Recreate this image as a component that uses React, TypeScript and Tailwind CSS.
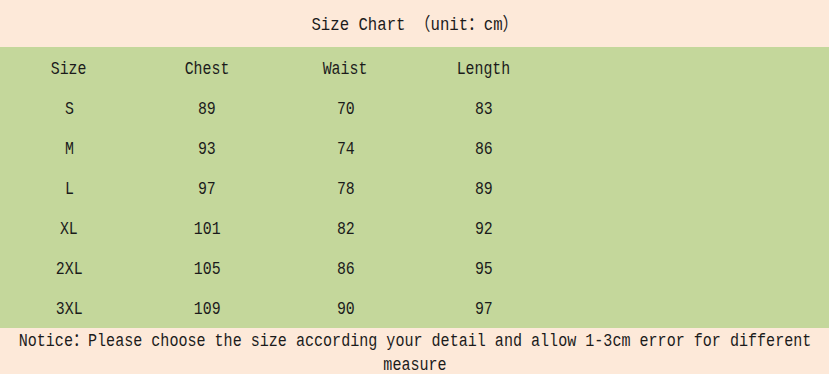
import React from "react";

const rows = [
  ["Size", "Chest", "Waist", "Length"],
  ["S", "89", "70", "83"],
  ["M", "93", "74", "86"],
  ["L", "97", "78", "89"],
  ["XL", "101", "82", "92"],
  ["2XL", "105", "86", "95"],
  ["3XL", "109", "90", "97"],
];

export default function App() {
  return (
    <div
      className="w-[831px] h-[374px] overflow-hidden bg-white text-[18px] text-[#1b1b1b]"
      style={{ fontFamily: '"Liberation Mono", "Noto Sans CJK SC", monospace' }}
    >
      <div className="h-[47px] bg-[#fde9d9] flex items-center justify-center pt-[3px] mr-[2px]">
        <span className="inline-block scale-x-[0.87] whitespace-nowrap">Size Chart （unit：cm）</span>
      </div>
      <div className="bg-[#c4d79b] pt-[1px] mr-[2px]">
        {rows.map((r, i) => (
          <div key={i} className="grid grid-cols-6 h-[40px] items-center pt-[1px]">
            {r.map((c, j) => (
              <div key={j} className="text-center leading-[20px]">
                <span className="inline-block scale-x-[0.826]">{c}</span>
              </div>
            ))}
            <div />
            <div />
          </div>
        ))}
      </div>
      <div className="bg-[#fde9d9] mr-[2px] h-[46px] flex justify-center leading-[24px] pt-[1px]">
        <div className="w-[950px] shrink-0 text-center scale-x-[0.837]">
          Notice：Please choose the size according your detail and allow 1-3cm error for different measure
        </div>
      </div>
    </div>
  );
}
